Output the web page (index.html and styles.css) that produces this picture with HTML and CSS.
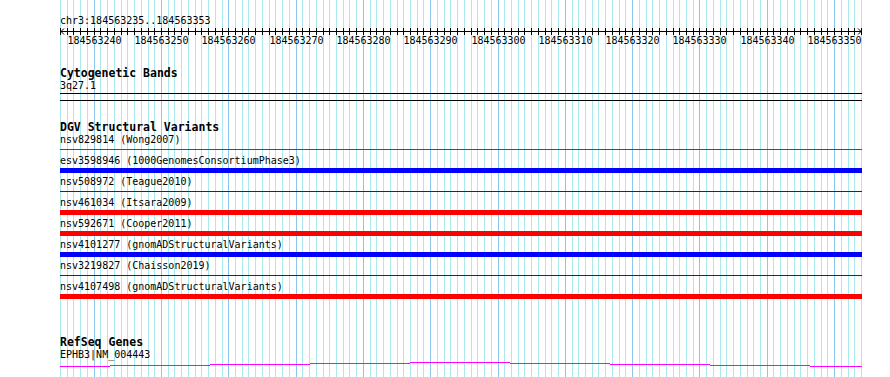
FILE: index.html
```html
<!DOCTYPE html>
<html lang="en">
<head>
  <meta charset="UTF-8" />
  <meta name="viewport" content="width=device-width, initial-scale=1.0" />
  <title>chr3:184563235..184563353</title>
  <link rel="stylesheet" href="styles.css">
</head>
<body>
  <div class="browser">
    <svg id="grid" class="grid" width="802" height="377"></svg>

    <div class="position">chr3:184563235..184563353</div>
    <svg id="ruler" class="ruler" width="802" height="20"></svg>

    <div class="track cytobands">
      <div class="track-title">Cytogenetic Bands</div>
      <div class="label">3q27.1</div>
      <div class="band"></div>
    </div>

    <div class="track dgv">
      <div class="track-title">DGV Structural Variants</div>
      <div class="feature">
        <div class="label">nsv829814 (Wong2007)</div>
        <div class="slot"><div class="bar thin loss"></div></div>
      </div>
      <div class="feature">
        <div class="label">esv3598946 (1000GenomesConsortiumPhase3)</div>
        <div class="slot"><div class="bar thick gain"></div></div>
      </div>
      <div class="feature">
        <div class="label">nsv508972 (Teague2010)</div>
        <div class="slot"><div class="bar thin gain"></div></div>
      </div>
      <div class="feature">
        <div class="label">nsv461034 (Itsara2009)</div>
        <div class="slot"><div class="bar thick loss"></div></div>
      </div>
      <div class="feature">
        <div class="label">nsv592671 (Cooper2011)</div>
        <div class="slot"><div class="bar thick loss"></div></div>
      </div>
      <div class="feature">
        <div class="label">nsv4101277 (gnomADStructuralVariants)</div>
        <div class="slot"><div class="bar thick gain"></div></div>
      </div>
      <div class="feature">
        <div class="label">nsv3219827 (Chaisson2019)</div>
        <div class="slot"><div class="bar thin gain"></div></div>
      </div>
      <div class="feature">
        <div class="label">nsv4107498 (gnomADStructuralVariants)</div>
        <div class="slot"><div class="bar thick loss"></div></div>
      </div>
    </div>

    <div class="track refseq">
      <div class="track-title">RefSeq Genes</div>
      <div class="label">EPHB3|NM_004443</div>
      <svg class="gene" width="802" height="16">
        <rect x="0" y="5" width="50" height="1" />
        <rect x="50" y="4" width="100" height="1" />
        <rect x="150" y="3" width="100" height="1" />
        <rect x="250" y="2" width="100" height="1" />
        <rect x="350" y="1" width="100" height="1" />
        <rect x="450" y="2" width="100" height="1" />
        <rect x="550" y="3" width="100" height="1" />
        <rect x="650" y="4" width="100" height="1" />
        <rect x="750" y="5" width="52" height="1" />
      </svg>
    </div>
  </div>

  <script>
    const NS = 'http://www.w3.org/2000/svg';
    const START = 184563235;
    const BASES = 119;
    const STEP = 801 / BASES;

    function el(name, attrs) {
      const node = document.createElementNS(NS, name);
      for (const k in attrs) node.setAttribute(k, attrs[k]);
      return node;
    }

    const grid = document.getElementById('grid');
    const ruler = document.getElementById('ruler');

    // base line + arrows
    ruler.appendChild(el('rect', { x: 0, y: 4, width: 802, height: 1, fill: '#000' }));
    ruler.appendChild(el('path', { d: 'M4 1.5 L1 4.5 L4 7.5', class: 'arrow' }));
    ruler.appendChild(el('path', { d: 'M798 1.5 L801 4.5 L798 7.5', class: 'arrow' }));

    for (let k = 0; k <= BASES; k++) {
      const x = Math.round(k * STEP);
      const major = (START + k) % 10 === 0;
      grid.appendChild(el('rect', { x: x, y: 0, width: 1, height: 377, class: major ? 'major' : 'minor' }));
      ruler.appendChild(el('rect', { x: x, y: 1, width: 1, height: 7, fill: '#000' }));
      if (major) {
        const t = el('text', { x: x + 0.5, y: 16.5, 'text-anchor': 'middle' });
        t.textContent = START + k;
        ruler.appendChild(t);
      }
    }
  </script>
</body>
</html>
```

FILE: styles.css
```css
body {
  margin: 0;
  background: #fff;
  color: #000;
  font-family: "DejaVu Sans Mono", monospace;
  font-size: 10px;
}
.browser {
  position: relative;
  z-index: 0;
  width: 802px;
  margin-left: 60px;
  padding-top: 15px;
}
.grid {
  position: absolute;
  left: 0;
  top: 0;
  z-index: -1;
}
.grid .minor {
  fill: #aae9ee;
}
.grid .major {
  fill: #8cc6ea;
}
.position {
  line-height: 12px;
}
.ruler {
  display: block;
}
.ruler text {
  font-family: "DejaVu Sans Mono", monospace;
  font-size: 10px;
  fill: #000;
}
.ruler .arrow {
  fill: none;
  stroke: #000;
  stroke-width: 1;
}
.track-title {
  font-weight: bold;
  font-size: 11.5px;
  line-height: 13px;
}
.label {
  line-height: 12px;
  white-space: nowrap;
}
.cytobands {
  margin-top: 20px;
}
.band {
  margin-top: 1px;
  height: 6px;
  border-top: 1px solid #000;
  border-bottom: 1px solid #000;
}
.dgv {
  margin-top: 20px;
}
.feature {
  height: 21px;
}
.slot {
  margin-top: 1px;
  height: 5px;
  display: flex;
  flex-direction: column;
  justify-content: center;
}
.bar.thick {
  height: 5px;
}
.bar.thin {
  height: 1px;
}
.thick.gain {
  background: #0000ff;
}
.thick.loss {
  background: #ff0000;
}
.thin.gain {
  background: #1a1ab0;
}
.thin.loss {
  background: #e01010;
}
.refseq {
  margin-top: 34px;
}
.gene {
  display: block;
  fill: #ff00ff;
}
```
